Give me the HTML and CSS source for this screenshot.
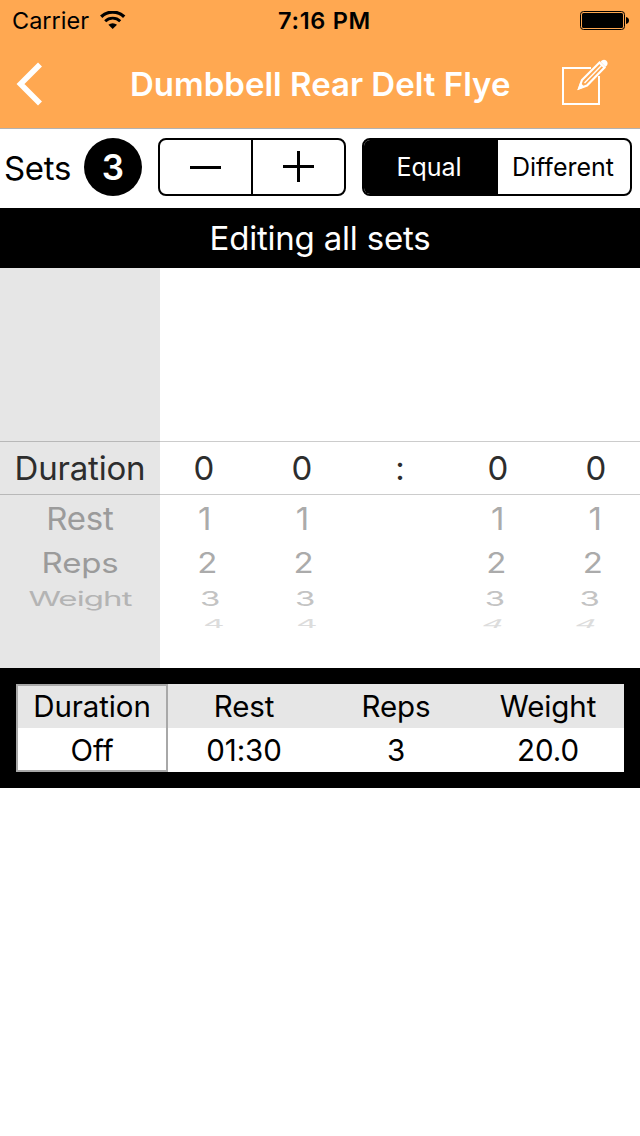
FILE: index.html
```
<!DOCTYPE html>
<html>
<head>
    <meta charset="utf-8">
    <title>Dumbbell Rear Delt Flye</title>
    <link rel="stylesheet" href="styles.css">
</head>
<body>

<header class="header">
    <div class="status-bar">
        <div class="carrier">
            <span>Carrier</span>
            <svg width="26" height="18" viewBox="0 0 26 18">
                <path d="M1.200 5.800a16.500 16.500 0 0 1 23 0" fill="none" stroke="#000" stroke-width="3.300"/>
                <path d="M5.200 10.200a10.800 10.800 0 0 1 15 0" fill="none" stroke="#000" stroke-width="2.900"/>
                <path d="M8.400 13.800a6.400 6.400 0 0 1 8.600 0l-4.300 4.200z"/>
            </svg>
        </div>
        <div class="time">7:16 PM</div>
        <svg class="battery" width="50" height="19" viewBox="0 0 50 19">
            <rect x=".5" y=".5" width="44" height="18" rx="3" fill="none" stroke="#000"/>
            <rect x="2" y="2" width="41" height="15" rx="1.5"/>
            <path d="M46 6c2 .4 3 1.700 3 3.500s-1 3.100-3 3.500z"/>
        </svg>
    </div>
    <div class="nav-bar">
        <svg width="28" height="44" viewBox="0 0 28 44">
            <path d="M25 2.500L5.500 22 25 41.500" fill="none" stroke="#fff" stroke-width="5.600"/>
        </svg>
        <h1>Dumbbell Rear Delt Flye</h1>
        <svg class="edit" width="48" height="48" viewBox="0 0 48 48" fill="none" stroke="#fff">
            <path d="M31 9H3v36h36V17" stroke-width="2"/>
            <path d="M19 29.500l3-8.500L39.500 3.500l5 5-17.500 18z" stroke-width="2.200"/>
            <path d="M24.500 24L42 6" stroke-width="1.400"/>
            <path d="M17.600 31l2.600-7.500 4.500 4.500z" fill="#fff" stroke="none"/>
            <path d="M40.500 2.800l1.600-1.600a3.700 3.700 0 0 1 5 5l-1.600 1.800z" fill="#fff" stroke="none"/>
        </svg>
    </div>
</header>

<div class="sets-row">
    <span class="sets-label">Sets</span>
    <span class="sets-count">3</span>
    <div class="stepper">
        <button>
            <svg width="32" height="32" viewBox="0 0 32 32"><path d="M0 16.500h31" stroke="#000" stroke-width="3"/></svg>
        </button>
        <button>
            <svg width="32" height="32" viewBox="0 0 32 32"><path d="M0 15.500h31M15.500 0v31" stroke="#000" stroke-width="3"/></svg>
        </button>
    </div>
    <div class="segmented">
        <button class="active">Equal</button>
        <button>Different</button>
    </div>
</div>

<div class="banner">Editing all sets</div>

<div class="picker">
    <div class="wheel types">
        <div class="row selected"><span>Duration</span></div>
        <div class="row r1"><span>Rest</span></div>
        <div class="row r2"><span>Reps</span></div>
        <div class="row r3"><span>Weight</span></div>
    </div>
    <div class="wheel digits">
        <div class="row selected"><span>0</span><span>0</span><span>:</span><span>0</span><span>0</span></div>
        <div class="row r1"><span>1</span><span>1</span><span></span><span>1</span><span>1</span></div>
        <div class="row r2"><span>2</span><span>2</span><span></span><span>2</span><span>2</span></div>
        <div class="row r3"><span>3</span><span>3</span><span></span><span>3</span><span>3</span></div>
        <div class="row r4"><span>4</span><span>4</span><span></span><span>4</span><span>4</span></div>
    </div>
</div>

<div class="summary">
    <div class="cell active"><div class="name">Duration</div><div class="value">Off</div></div>
    <div class="cell"><div class="name">Rest</div><div class="value">01:30</div></div>
    <div class="cell"><div class="name">Reps</div><div class="value">3</div></div>
    <div class="cell"><div class="name">Weight</div><div class="value">20.0</div></div>
</div>

</body>
</html>
```
FILE: styles.css
```
* { box-sizing: border-box; }
body {
    margin: 0; background: #fff; color: #000;
    font-family: Inter, "Liberation Sans", sans-serif;
}
svg { display: block; }
button {
    padding: 0; border: 0; background: none; color: #000;
    font-family: inherit; font-size: 25px;
    display: flex; align-items: center; justify-content: center;
}

/* header */
.header { height: 129px; background: #ffa851; border-bottom: 1px solid #b2b2b2; }
.status-bar {
    height: 40px; padding: 0 10px 0 12px;
    display: grid; grid-template-columns: 1fr auto 1fr; align-items: center;
    font-size: 23.5px;
}
.carrier { display: flex; align-items: center; gap: 11px; }
.time { padding-left: 7px; font-weight: 600; letter-spacing: 0.7px; }
.battery { justify-self: end; }
.nav-bar {
    height: 88px; padding: 0 32px 0 15px;
    display: flex; align-items: center;
    color: #fff;
}
.nav-bar h1 { flex: 1; margin: 0 0 0 87px; font-size: 33px; font-weight: 600; white-space: nowrap; }
.edit { margin-bottom: 2px; }

/* sets */
.sets-row { height: 79px; padding: 9px 8px 12px 4px; display: flex; }
.sets-label { width: 80px; font-size: 33px; line-height: 60px; letter-spacing: -0.3px; }
.sets-count {
    width: 58px; height: 58px; margin-right: 16px; border-radius: 50%;
    background: #000; color: #fff;
    font-size: 35px; font-weight: 600; line-height: 59px; text-align: center;
}
.stepper, .segmented {
    height: 58px; border: 2px solid #000; border-radius: 8px;
    display: flex; overflow: hidden;
}
.stepper { width: 188px; margin-right: 16px; }
.segmented { width: 270px; background: #fff; }
.stepper button, .segmented button { flex: 1; }
.stepper button + button { border-left: 2px solid #000; }
.segmented button { padding-right: 2px; }
.segmented .active { flex: 0 0 134px; padding-right: 4px; background: #000; color: #fff; }

.banner {
    height: 60px; background: #000; color: #fff;
    font-size: 33px; line-height: 61px; letter-spacing: -0.2px; text-align: center;
}

/* picker wheels */
.picker { height: 400px; display: flex; }
.wheel { padding-top: 173px; font-size: 33px; }
.types { width: 160px; background: #e6e6e6; letter-spacing: -0.2px; }
.types .r3 { letter-spacing: -0.9px; }
.digits { width: 480px; overflow: hidden; }
.row { display: flex; justify-content: center; align-items: center; }
.row span { flex-shrink: 0; text-align: center; }
.selected {
    height: 54px; color: #2d2d2d;
    border-top: 1px solid rgba(0,0,0,0.2); border-bottom: 1px solid rgba(0,0,0,0.2);
}
.digits .selected span { width: 98px; }
.r1 { height: 45px; color: #9b9b9b; }
.r1 span { transform: scaleY(0.96); }
.r2 { height: 45px; color: #9b9b9b; }
.r2 span { transform: scaleY(0.84); }
.r3 { height: 28px; color: #b4b4b4; }
.r3 span { transform: scaleY(0.61); }
.r4 { height: 21px; color: #dcdcdc; }
.digits .r1, .digits .r2 { color: #ababab; }
.digits .r3 { color: #c3c3c3; }
.digits .r1 span { width: 97.6px; }
.digits .r2 span { width: 96.4px; }
.digits .r3 span { width: 94.9px; }
.digits .r4 span { width: 93px; transform: scaleY(0.37); }
.digits .r4 span:nth-child(n+3) { transform: scaleY(0.37) skewX(-12deg); }

/* summary table */
.summary { height: 120px; padding: 16px; background: #000; display: flex; }
.cell { flex: 1; position: relative; font-size: 29.5px; letter-spacing: -0.1px; text-align: center; background: #fff; }
.name, .value { height: 44px; line-height: 45px; }
.name { background: #e6e6e6; }
.cell.active::after {
    content: ""; position: absolute; inset: 0;
    border: 2px solid #a8a8a8;
}
```
